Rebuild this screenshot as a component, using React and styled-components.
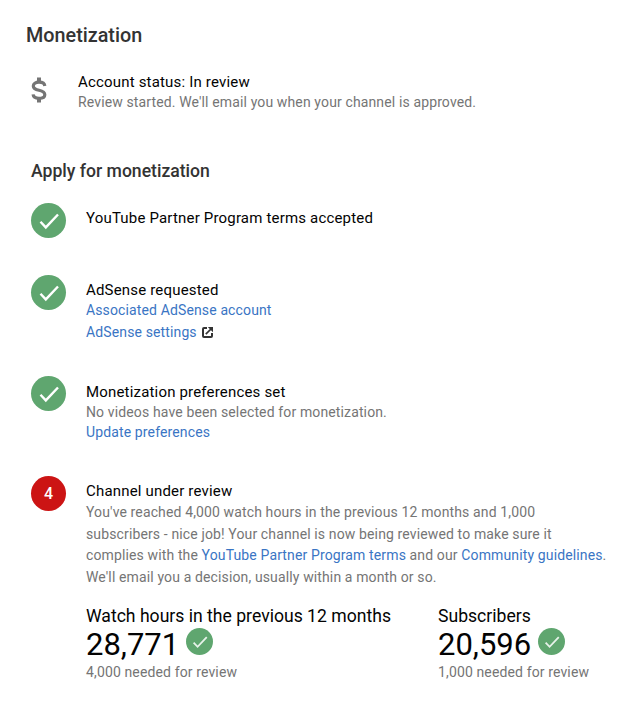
import React from 'react';
import styled, { createGlobalStyle } from 'styled-components';

const GlobalStyle = createGlobalStyle`
  html, body {
    margin: 0;
    padding: 0;
    background: #fff;
  }
  body {
    font-family: Roboto, "Liberation Sans", sans-serif;
    font-size: 14px;
    color: #030303;
  }
`;

const Page = styled.div`
  width: 641px;
  height: 712px;
  overflow: hidden;
  box-sizing: border-box;
  padding: 24px 0 0 26px;
`;

const Title = styled.h1`
  margin: 0;
  font-size: 19.8px;
  line-height: 24px;
  font-weight: 500;
  color: #333;
`;

const StatusRow = styled.div`
  display: flex;
  margin-top: 24px;
`;

const StatusIcon = styled.div`
  width: 47px;
  margin-left: 5px;
  flex: none;
  color: #757575;
  svg {
    display: block;
    margin-top: 5px;
  }
`;

const Subtitle = styled.h2`
  margin: 47px 0 0 5px;
  font-size: 17.6px;
  line-height: 24px;
  font-weight: 500;
  color: #333;
`;

const Steps = styled.div`
  margin: 20px 0 0 5px;
`;

const Step = styled.div`
  display: flex;
  min-height: ${(p) => p.$height}px;
`;

const Badge = styled.div`
  width: ${(p) => p.$size || 35}px;
  height: ${(p) => p.$size || 35}px;
  flex: none;
  border-radius: 50%;
  background: ${(p) => (p.$red ? '#cc1414' : '#5fa66f')};
  color: #fff;
  display: flex;
  align-items: center;
  justify-content: center;
  font-size: 16px;
  font-weight: 500;
`;

const StepBody = styled.div`
  margin-left: 20px;
  padding-top: ${(p) => p.$top || 5}px;
  flex: 1;
  min-width: 0;
`;

const Line = styled.div`
  font-size: 15px;
  line-height: 20px;
  letter-spacing: 0.18px;
  color: #030303;
  white-space: nowrap;
`;

const Muted = styled.div`
  font-size: 14px;
  line-height: 20px;
  letter-spacing: 0.13px;
  color: #757575;
  white-space: nowrap;
`;

const Paragraph = styled(Muted)`
  margin-top: 1px;
  line-height: 21.7px;
`;

const TextLink = styled.a`
  color: #3a75c4;
  text-decoration: none;
`;

const LinkLine = styled(Muted)`
  display: flex;
  align-items: center;
  margin-top: ${(p) => p.$gap || 0}px;
  color: #3a75c4;
  svg {
    margin-left: 5px;
  }
`;

const Stats = styled.div`
  display: flex;
  margin-top: 16px;
`;

const Stat = styled.div`
  width: ${(p) => p.$width}px;
  flex: none;
`;

const StatLabel = styled.div`
  font-size: 17.6px;
  line-height: 23px;
  color: #030303;
`;

const StatValue = styled.div`
  display: flex;
  align-items: center;
  font-size: 31px;
  line-height: 34px;
  color: #030303;
`;

const StatBadge = styled(Badge)`
  margin: -6px 0 0 7px;
`;

const Check = ({ size, opacity = 1 }) => (
  <svg width={size} height={size} viewBox="0 0 24 24" fill="none">
    <path d="M3.5 12.8l5.3 5.6L21 5.5" stroke="#fff" strokeOpacity={opacity} strokeWidth="2.4" />
  </svg>
);

const Dollar = () => (
  <svg width="16" height="26" viewBox="0 0 16 26" fill="none">
    <path
      d="M13.8 9C13.6 6.6 11.7 5.2 8 5.2 4.5 5.2 2.3 6.8 2.3 9c0 2.4 2 3.5 5.7 4.3 3.9.8 5.8 2 5.8 4.4 0 2.3-2.2 3.6-5.8 3.6-3.7 0-5.7-1.5-5.9-3.9"
      stroke="currentColor"
      strokeWidth="3.2"
    />
    <path d="M6 .5h4v4.5H6zM6 21h4v4.5H6z" fill="currentColor" />
  </svg>
);

const ExternalIcon = () => (
  <svg width="11" height="11" viewBox="0 0 11 11" fill="none">
    <path d="M5 1H2a1 1 0 0 0-1 1v7a1 1 0 0 0 1 1h7a1 1 0 0 0 1-1V6" stroke="#333" strokeWidth="2" />
    <path d="M3.8 7.2L9 2" stroke="#333" strokeWidth="1.7" />
    <path d="M5.8 0h5.2v5.2z" fill="#333" />
  </svg>
);

const App = () => (
  <Page>
    <GlobalStyle />
    <Title>Monetization</Title>
    <StatusRow>
      <StatusIcon>
        <Dollar />
      </StatusIcon>
      <div>
        <Line>Account status: In review</Line>
        <Muted>Review started. We'll email you when your channel is approved.</Muted>
      </div>
    </StatusRow>

    <Subtitle>Apply for monetization</Subtitle>
    <Steps>
      <Step $height={72}>
        <Badge>
          <Check size={24} />
        </Badge>
        <StepBody>
          <Line>YouTube Partner Program terms accepted</Line>
        </StepBody>
      </Step>
      <Step $height={101}>
        <Badge>
          <Check size={24} />
        </Badge>
        <StepBody>
          <Line>AdSense requested</Line>
          <LinkLine>Associated AdSense account</LinkLine>
          <LinkLine $gap={2}>
            AdSense settings
            <ExternalIcon />
          </LinkLine>
        </StepBody>
      </Step>
      <Step $height={100}>
        <Badge>
          <Check size={24} />
        </Badge>
        <StepBody $top={6}>
          <Line>Monetization preferences set</Line>
          <Muted>No videos have been selected for monetization.</Muted>
          <LinkLine>Update preferences</LinkLine>
        </StepBody>
      </Step>
      <Step>
        <Badge $red>4</Badge>
        <StepBody>
          <Line>Channel under review</Line>
          <Paragraph>
            You've reached 4,000 watch hours in the previous 12 months and 1,000
            <br />
            subscribers - nice job! Your channel is now being reviewed to make sure it
            <br />
            complies with the <TextLink>YouTube Partner Program terms</TextLink> and our{' '}
            <TextLink>Community guidelines</TextLink>.
            <br />
            We'll email you a decision, usually within a month or so.
          </Paragraph>
          <Stats>
            <Stat $width={352}>
              <StatLabel>Watch hours in the previous 12 months</StatLabel>
              <StatValue>
                28,771
                <StatBadge $size={27}>
                  <Check size={18} opacity={0.85} />
                </StatBadge>
              </StatValue>
              <Muted>4,000 needed for review</Muted>
            </Stat>
            <Stat $width={180}>
              <StatLabel>Subscribers</StatLabel>
              <StatValue>
                20,596
                <StatBadge $size={27}>
                  <Check size={18} opacity={0.85} />
                </StatBadge>
              </StatValue>
              <Muted>1,000 needed for review</Muted>
            </Stat>
          </Stats>
        </StepBody>
      </Step>
    </Steps>
  </Page>
);

export default App;
